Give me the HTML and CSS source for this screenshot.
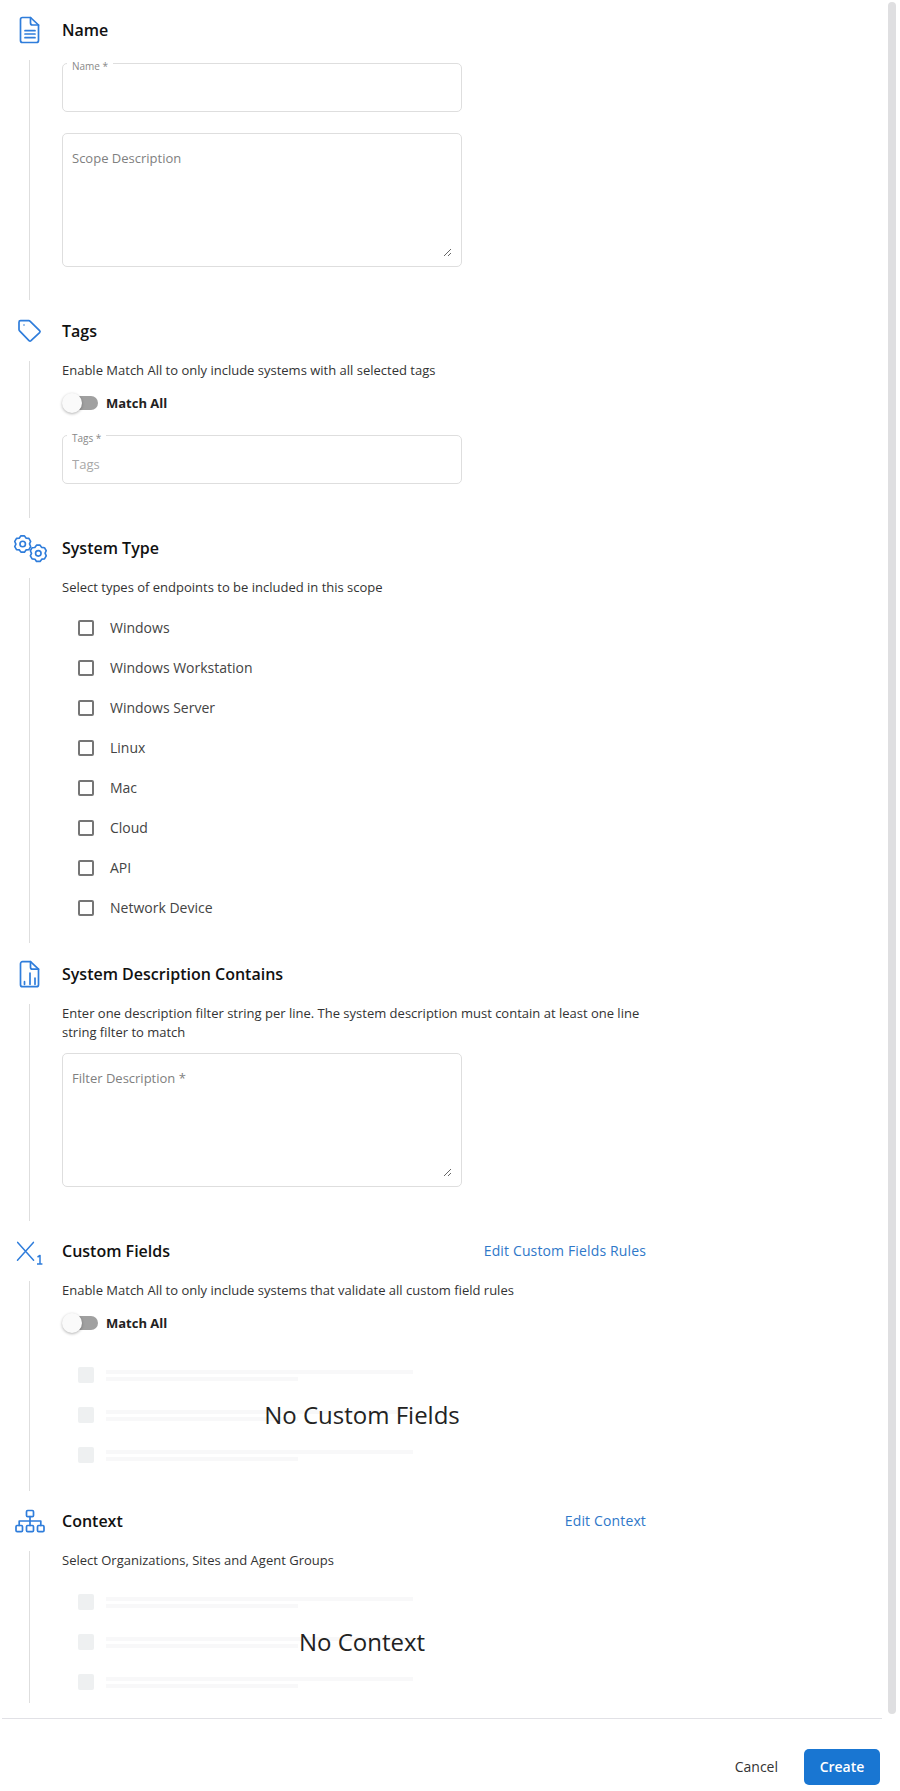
FILE: index.html
```html
<!DOCTYPE html>
<html lang="en">
<head>
<meta charset="utf-8">
<title>Create Scope</title>
<link rel="stylesheet" href="styles.css">
</head>
<body>
<svg class="defs" width="0" height="0" aria-hidden="true">
  <defs>
    <g id="gear">
      <path d="M-1.6-7.4H1.6L3-5.4 5.61-5.09 7.21-2.31 6.18-.1 7.21 2.31 5.61 5.09 3.18 5.3 1.6 7.4H-1.6L-3 5.4-5.61 5.09-7.21 2.31-6.18.1-7.21-2.31-5.61-5.09-3.18-5.3Z"/>
      <circle r="2.5"/>
    </g>
  </defs>
</svg>
<div class="shell">
  <main class="form">
    <section class="section">
      <header class="head">
        <span class="icon"><svg class="ico" viewBox="0 0 35 30"><path d="M10.5 2.5H18.5L26.5 10V25.5A2 2 0 0 1 24.5 27.5H10.5A2 2 0 0 1 8.5 25.5V4.5A2 2 0 0 1 10.5 2.5Z"/><path d="M18.5 2.5V8A2 2 0 0 0 20.5 10H26.5"/><path d="M13 15.7H23M13 19H23M13 22.7H23"/></svg></span>
        <h2 class="title">Name</h2>
      </header>
      <div class="body body-name">
        <div class="field field-input">
          <span class="float-label">Name *</span>
          <input class="control" type="text" aria-label="Name">
        </div>
        <div class="field field-area"><textarea class="area" placeholder="Scope Description"></textarea></div>
      </div>
    </section>

    <section class="section">
      <header class="head">
        <span class="icon"><svg class="ico" viewBox="0 0 35 30"><path d="M8.5 4.7H16.8Q17.6 4.7 18.2 5.3L27.6 14.6Q28.6 15.6 27.6 16.6L19 24.7Q18 25.6 17 24.6L7.6 14.8Q7 14.2 7 13.4V6.2A1.5 1.5 0 0 1 8.5 4.7Z"/><circle class="dot" cx="12" cy="9" r=".8"/></svg></span>
        <h2 class="title">Tags</h2>
      </header>
      <div class="body body-tags">
        <p class="desc">Enable Match All to only include systems with all selected tags</p>
        <div class="toggle-row"><span class="track"><span class="thumb"></span></span><span class="toggle-label">Match All</span></div>
        <div class="field field-input">
          <span class="float-label">Tags *</span>
          <input class="control" type="text" placeholder="Tags">
        </div>
      </div>
    </section>

    <section class="section">
      <header class="head">
        <span class="icon"><svg class="ico ico-gears" viewBox="0 0 35 30"><use href="#gear" transform="translate(10.7 11) scale(1.1)"/><use href="#gear" transform="translate(26.3 20.3) scale(1.1)"/></svg></span>
        <h2 class="title">System Type</h2>
      </header>
      <div class="body body-types">
        <p class="desc">Select types of endpoints to be included in this scope</p>
        <ul class="checks">
          <li class="check"><span class="box"></span><span class="check-label">Windows</span></li>
          <li class="check"><span class="box"></span><span class="check-label">Windows Workstation</span></li>
          <li class="check"><span class="box"></span><span class="check-label">Windows Server</span></li>
          <li class="check"><span class="box"></span><span class="check-label">Linux</span></li>
          <li class="check"><span class="box"></span><span class="check-label">Mac</span></li>
          <li class="check"><span class="box"></span><span class="check-label">Cloud</span></li>
          <li class="check"><span class="box"></span><span class="check-label">API</span></li>
          <li class="check"><span class="box"></span><span class="check-label">Network Device</span></li>
        </ul>
      </div>
    </section>

    <section class="section">
      <header class="head">
        <span class="icon"><svg class="ico" viewBox="0 0 35 30"><path d="M10.5 2.7H18.5L26.5 10.2V25.7A2 2 0 0 1 24.5 27.7H10.5A2 2 0 0 1 8.5 25.7V4.7A2 2 0 0 1 10.5 2.7Z"/><path d="M18.5 2.7V8.2A2 2 0 0 0 20.5 10.2H26.5"/><path d="M12.5 22.7V25.3M18 14V25.3M23 19V25.3"/></svg></span>
        <h2 class="title">System Description Contains</h2>
      </header>
      <div class="body body-filter">
        <p class="desc desc-wide">Enter one description filter string per line. The system description must contain at least one line string filter to match</p>
        <div class="field field-area"><textarea class="area" placeholder="Filter Description *"></textarea></div>
      </div>
    </section>

    <section class="section">
      <header class="head">
        <span class="icon"><svg class="ico ico-thin" viewBox="0 0 35 30"><path d="M5.7 6.4 21.6 24.2M21.4 6.4 5.5 24.2"/><path class="one" d="M25.5 21 28 19.5V28M25 28H30.4"/></svg></span>
        <h2 class="title">Custom Fields</h2>
        <a class="edit" href="#">Edit Custom Fields Rules</a>
      </header>
      <div class="body body-custom">
        <p class="desc">Enable Match All to only include systems that validate all custom field rules</p>
        <div class="toggle-row"><span class="track"><span class="thumb"></span></span><span class="toggle-label">Match All</span></div>
        <div class="empty empty-custom">
          <div class="ghost"><span class="ghost-box"></span><span class="ghost-lines"><i class="ghost-long"></i><i class="ghost-short"></i></span></div>
          <div class="ghost"><span class="ghost-box"></span><span class="ghost-lines"><i class="ghost-long"></i><i class="ghost-short"></i></span></div>
          <div class="ghost"><span class="ghost-box"></span><span class="ghost-lines"><i class="ghost-long"></i><i class="ghost-short"></i></span></div>
          <span class="empty-text">No Custom Fields</span>
        </div>
      </div>
    </section>

    <section class="section">
      <header class="head">
        <span class="icon"><svg class="ico" viewBox="0 0 35 30"><rect x="14.5" y="4.5" width="7" height="6.2" rx="1.2"/><rect x="4" y="19.5" width="6.5" height="6.2" rx="1.2"/><rect x="14.5" y="19.5" width="7" height="6.2" rx="1.2"/><rect x="25.5" y="19.5" width="6.5" height="6.2" rx="1.2"/><path d="M18 10.7V19.5M7.2 19.5V15H28.8V19.5"/></svg></span>
        <h2 class="title">Context</h2>
        <a class="edit" href="#">Edit Context</a>
      </header>
      <div class="body body-context">
        <p class="desc">Select Organizations, Sites and Agent Groups</p>
        <div class="empty empty-context">
          <div class="ghost"><span class="ghost-box"></span><span class="ghost-lines"><i class="ghost-long"></i><i class="ghost-short"></i></span></div>
          <div class="ghost"><span class="ghost-box"></span><span class="ghost-lines"><i class="ghost-long"></i><i class="ghost-short"></i></span></div>
          <div class="ghost"><span class="ghost-box"></span><span class="ghost-lines"><i class="ghost-long"></i><i class="ghost-short"></i></span></div>
          <span class="empty-text">No Context</span>
        </div>
      </div>
    </section>
  </main>
  <div class="scrollbar"></div>
</div>
<footer class="footer">
  <button class="btn btn-text" type="button">Cancel</button>
  <button class="btn btn-primary" type="button">Create</button>
</footer>
</body>
</html>
```
FILE: styles.css
```css
* { box-sizing: border-box; }
html, body { margin: 0; padding: 0; }
body {
  width: 900px;
  height: 1791px;
  overflow: hidden;
  background: #fff;
  font-family: "Open Sans", "Liberation Sans", sans-serif;
  color: #333;
}
.defs { position: absolute; }
.shell {
  display: flex;
  height: 1718px;
  padding-right: 4px;
}
.form {
  flex: 1;
  padding-top: 15px;
}
.scrollbar {
  width: 8px;
  height: 1712px;
  margin-top: 2px;
  border-radius: 4px;
  background: #dfdfe1;
}
.section { width: 662px; }
.head {
  display: flex;
  align-items: center;
  height: 30px;
  margin-bottom: 15px;
  padding-right: 16px;
}
.icon {
  flex: none;
  display: flex;
  width: 62px;
  height: 30px;
  padding-left: 12px;
}
.ico {
  width: 35px;
  height: 30px;
  fill: none;
  stroke: #2f7ddb;
  stroke-width: 1.7;
  stroke-linejoin: round;
  stroke-linecap: round;
}
.ico-thin { stroke-width: 1.5; }
.ico-gears { stroke-width: 1.5; }
.ico .dot { fill: #2f7ddb; stroke: none; }
.ico .one { stroke-width: 1.5; stroke-linecap: butt; }
.title {
  flex: 1;
  margin: 0;
  font-size: 16px;
  font-weight: 600;
  line-height: 30px;
  color: #111;
}
.edit {
  margin-bottom: 2px;
  font-size: 14px;
  font-weight: 500;
  letter-spacing: .14px;
  color: #2f78c9;
  text-decoration: none;
}
.body {
  margin: 0 0 16px 29px;
  padding-left: 32px;
  border-left: 1px solid #dedede;
}
.body-name { height: 240px; padding-top: 3px; }
.body-tags { height: 157px; }
.body-types { height: 365px; }
.body-filter { height: 217px; }
.body-custom { height: 210px; }
.body-context { height: 152px; margin-bottom: 0; }
.section:nth-child(2) .body,
.section:nth-child(4) .body,
.section:nth-child(5) .body { margin-bottom: 15px; }
.desc {
  margin: 0;
  font-size: 13px;
  line-height: 19px;
  color: #333;
}
.field {
  position: relative;
  width: 400px;
  border: 1px solid #dedede;
  border-radius: 5px;
  background: #fff;
}
.field-input { height: 49px; }
.body-tags .field-input { margin-top: 16px; }
.field-area {
  display: flex;
  height: 134px;
  padding: 15px 9px 9px 9px;
}
.body-name .field-area { margin-top: 21px; }
.body-filter .field-area { margin-top: 11px; }
.float-label {
  position: absolute;
  top: -4px;
  left: 4px;
  padding: 0 5px;
  background: #fff;
  font-size: 10px;
  line-height: 12px;
  color: #888;
}
.control {
  display: block;
  width: 100%;
  height: 100%;
  padding: 8px 9px 0;
  border: 0;
  outline: 0;
  border-radius: 5px;
  background: transparent;
  font: 13px "Open Sans", sans-serif;
  color: #333;
}
.control::placeholder { color: #a8a8a8; }
.area {
  flex: 1;
  display: block;
  padding: 0;
  border: 0;
  outline: 0;
  resize: both;
  background: transparent;
  font: 13px/19px "Open Sans", sans-serif;
  color: #333;
}
.area::placeholder { color: #808080; }
.toggle-row {
  display: flex;
  align-items: center;
  height: 32px;
  margin-top: 7px;
}
.track {
  position: relative;
  width: 35px;
  height: 14px;
  margin-left: 1px;
  border-radius: 7px;
  background: #a0a0a0;
}
.thumb {
  position: absolute;
  top: -3px;
  left: -1px;
  width: 20px;
  height: 20px;
  border-radius: 50%;
  background: #fafafa;
  box-shadow: 0 1px 3px rgba(0, 0, 0, .3);
}
.toggle-label {
  margin-left: 8px;
  font-size: 13px;
  font-weight: 700;
  color: #222;
}
.checks {
  margin: 11px 0 0;
  padding: 0;
  list-style: none;
}
.check {
  display: flex;
  align-items: center;
  height: 40px;
  padding-left: 16px;
  font-size: 14px;
  color: #444;
}
.check-label { margin-bottom: 2px; }
.box {
  width: 16px;
  height: 16px;
  margin-right: 16px;
  border: 2px solid #757575;
  border-radius: 2px;
}
.desc-wide { width: 600px; }
.empty {
  position: relative;
  width: 600px;
}
.empty-custom { margin-top: 28px; }
.empty-context { margin-top: 24px; }
.ghost {
  display: flex;
  align-items: flex-start;
  height: 40px;
  padding-left: 16px;
}
.ghost-box {
  width: 16px;
  height: 16px;
  margin-right: 12px;
  border-radius: 2px;
  background: #eef0f1;
}
.ghost-lines {
  display: flex;
  flex-direction: column;
  gap: 3px;
  padding-top: 3px;
}
.ghost-lines i {
  display: block;
  height: 4px;
  background: #f8f8f9;
}
.ghost-long { width: 307px; }
.ghost-short { width: 192px; }
.empty-text {
  position: absolute;
  top: 0;
  left: 0;
  width: 100%;
  padding-top: 28px;
  text-align: center;
  font-size: 24px;
  line-height: 40px;
  color: #222;
  pointer-events: none;
}
.footer {
  display: flex;
  justify-content: flex-end;
  align-items: center;
  gap: 26px;
  width: 880px;
  height: 73px;
  margin-left: 2px;
  padding: 30px 2px 6px 0;
  border-top: 1px solid #e1e1e6;
}
.btn {
  height: 36px;
  padding: 0 0 2px;
  border: 0;
  border-radius: 5px;
  font: 14px "Open Sans", sans-serif;
  cursor: pointer;
}
.btn-text {
  background: transparent;
  color: #333;
}
.btn-primary {
  width: 76px;
  background: #1976d2;
  color: #fff;
  font-weight: 600;
}
```
